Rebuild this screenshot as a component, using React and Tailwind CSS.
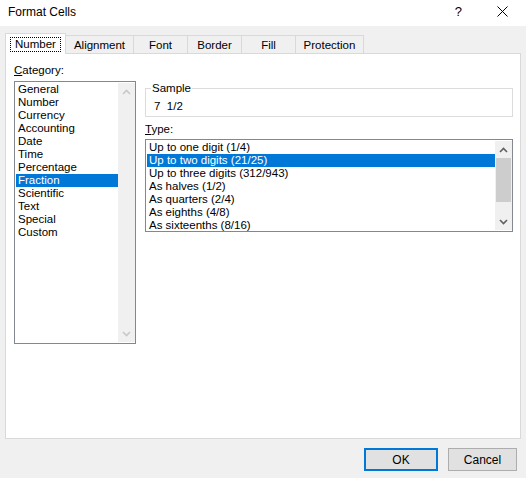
import { useState } from 'react'

const categories = [
  'General',
  'Number',
  'Currency',
  'Accounting',
  'Date',
  'Time',
  'Percentage',
  'Fraction',
  'Scientific',
  'Text',
  'Special',
  'Custom',
]

const types = [
  'Up to one digit (1/4)',
  'Up to two digits (21/25)',
  'Up to three digits (312/943)',
  'As halves (1/2)',
  'As quarters (2/4)',
  'As eighths (4/8)',
  'As sixteenths (8/16)',
]

const tabs = [
  { name: 'Number', w: 'w-[61px]' },
  { name: 'Alignment', w: 'w-[69px]' },
  { name: 'Font', w: 'w-[55px]' },
  { name: 'Border', w: 'w-[55px]' },
  { name: 'Fill', w: 'w-[55px]' },
  { name: 'Protection', w: 'w-[69px]' },
]

function Chevron({ up, color }) {
  return (
    <svg width="9" height="6" viewBox="0 0 9 6" className="block">
      <path
        d={up ? 'M1 5 L4.5 1.5 L8 5' : 'M1 1 L4.5 4.5 L8 1'}
        fill="none"
        stroke={color}
        strokeWidth="1.6"
      />
    </svg>
  )
}

function ScrollBar({ disabled, thumb }) {
  const arrow = disabled ? '#c8c8c8' : '#606060'
  return (
    <div className="flex w-[17px] shrink-0 flex-col bg-[#f0f0f0]">
      <div className="flex h-[17px] items-center justify-center">
        <Chevron up color={arrow} />
      </div>
      <div className="flex-1 px-px">
        {thumb && <div className="h-[44px] bg-[#cdcdcd]" />}
      </div>
      <div className="flex h-[17px] items-center justify-center">
        <Chevron color={arrow} />
      </div>
    </div>
  )
}

export default function App() {
  const [cat, setCat] = useState('Fraction')
  const [type, setType] = useState(1)

  return (
    <div className="flex h-[478px] w-[526px] flex-col bg-[#f0f0f0] font-['Liberation_Sans',Arial,sans-serif] text-[11.5px] text-black">
      {/* title bar */}
      <div className="flex h-[26px] shrink-0 items-center bg-white pb-[3px] pl-[8px]">
        <span className="text-[12px] leading-[14px]">Format Cells</span>
        <span className="ml-auto mr-[35px] text-[13px] leading-[14px]">?</span>
        <svg width="11" height="11" viewBox="0 0 11 11" className="mr-[18px]">
          <path d="M0.5 0.5 L10.5 10.5 M10.5 0.5 L0.5 10.5" stroke="#000" strokeWidth="1" />
        </svg>
      </div>

      {/* tabs */}
      <div className="mt-[7px] flex h-[20px] shrink-0 items-end pl-[5px]">
        {tabs.map((t, i) =>
          i === 0 ? (
            <div
              key={t.name}
              className={`relative z-10 -mb-px flex h-[21px] ${t.w} items-start justify-center border border-b-0 border-[#d9d9d9] bg-white pt-[3px]`}
            >
              <span className="border border-dotted border-black px-[4px] leading-[13px]">{t.name}</span>
            </div>
          ) : (
            <div
              key={t.name}
              className={`-ml-px flex h-[18px] ${t.w} items-start justify-center border border-b-0 border-[#d9d9d9] bg-[#f0f0f0] pt-[3px] leading-[13px]`}
            >
              {t.name}
            </div>
          ),
        )}
      </div>

      {/* panel */}
      <div className="mx-[5px] flex h-[386px] shrink-0 border border-[#d9d9d9] bg-white pl-[8px] pt-[10px]">
        <div className="flex w-[122px] shrink-0 flex-col">
          <div className="leading-[13px]">
            <span className="underline">C</span>ategory:
          </div>
          <div className="mt-[4px] flex h-[263px] w-[122px] border border-[#828790] bg-white p-px pr-0">
            <div className="flex-1">
              {categories.map((c) => (
                <div
                  key={c}
                  onClick={() => setCat(c)}
                  className={`h-[13px] pl-[2px] leading-[13px] ${cat === c ? 'bg-[#0078d7] text-white' : ''}`}
                >
                  {c}
                </div>
              ))}
            </div>
            <ScrollBar disabled />
          </div>
        </div>

        <div className="ml-[9px] flex w-[368px] shrink-0 flex-col pt-[18px]">
          <fieldset className="border border-[#dcdcdc] pb-[3px]">
            <legend className="ml-[5px] px-px leading-[13px]">Sample</legend>
            <div className="whitespace-pre pl-[8px] pt-[5px] leading-[13px]">7  1/2</div>
          </fieldset>
          <div className="mt-[6px] leading-[13px]">
            <span className="underline">T</span>ype:
          </div>
          <div className="mt-[3px] flex h-[93px] border border-[#828790] bg-white p-px pr-0">
            <div className="flex-1">
              {types.map((t, i) => (
                <div
                  key={t}
                  onClick={() => setType(i)}
                  className={`h-[13px] whitespace-nowrap pl-[2px] leading-[13px] ${type === i ? 'bg-[#0078d7] text-white' : ''}`}
                >
                  {t}
                </div>
              ))}
            </div>
            <ScrollBar thumb />
          </div>
        </div>
      </div>

      {/* buttons */}
      <div className="mt-[9px] flex justify-end gap-[10px] pr-[9px]">
        <button className="h-[23px] w-[74px] border-2 border-[#0078d7] bg-[#e1e1e1] text-[12px]">OK</button>
        <button className="h-[23px] w-[69px] border border-[#adadad] bg-[#e1e1e1] text-[12px]">Cancel</button>
      </div>
    </div>
  )
}
